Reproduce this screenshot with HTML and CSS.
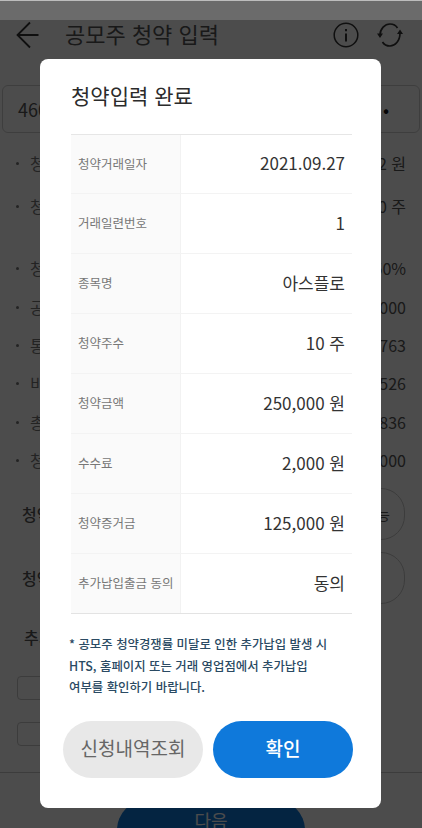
FILE: index.html
```html
<!DOCTYPE html>
<html lang="ko">
<head>
<meta charset="utf-8">
<title>공모주 청약 입력</title>
<link rel="stylesheet" href="styles.css">
</head>
<body>
<div class="page">
  <div class="status"></div>
  <header class="head">
    <svg class="back" width="24" height="28" viewBox="0 0 24 28"><path d="M22.500 14H2M14 1.500 1.500 14 14 26.500" fill="none" stroke="#333" stroke-width="1.800"/></svg>
    <h1 class="title">공모주 청약 입력</h1>
    <svg class="info" width="26" height="26" viewBox="0 0 26 26"><circle cx="13" cy="13" r="11.800" fill="none" stroke="#333" stroke-width="1.500"/><path d="M13 11.500v8M13 7v2.200" stroke="#333" stroke-width="2"/></svg>
    <svg class="refresh" width="26" height="26" viewBox="0 0 26 26"><path d="M3 13.500C3 6.500 8 2 13 2c3.500 0 6 1.500 7.500 4M23 11c0 8-5 13-10 13-3.500 0-6-1.500-7.500-4" fill="none" stroke="#333" stroke-width="1.700"/><path d="M0 11.500h6L3 16zM20 12h6l-3-4.500z" fill="#333"/></svg>
  </header>
  <div class="account"><span>4600</span><span class="dots">•</span></div>
  <ul class="facts">
    <li class="fact f1"><span class="fact-name">청약</span><span>2 원</span></li>
    <li class="fact f2"><span class="fact-name">청약</span><span>0 주</span></li>
    <li class="fact f3"><span class="fact-name">청약</span><span>50%</span></li>
    <li class="fact f4"><span class="fact-name">공모</span><span>000</span></li>
    <li class="fact f5"><span class="fact-name">통합</span><span>763</span></li>
    <li class="fact f6"><span class="fact-name">비례</span><span>526</span></li>
    <li class="fact f7"><span class="fact-name">총공</span><span>836</span></li>
    <li class="fact f8"><span class="fact-name">청약</span><span>000</span></li>
  </ul>
  <div class="field field-first"><span class="label">청약</span><div class="pill">가능</div></div>
  <div class="field"><span class="label">청약</span><div class="pill"></div></div>
  <div class="extra">추가</div>
  <div class="check"></div>
  <div class="check"></div>
  <div class="foot"><button class="next">다음</button></div>
</div>

<div class="dim"></div>

<section class="modal">
  <h2 class="modal-title">청약입력 완료</h2>
  <dl class="table">
    <div class="row"><dt>청약거래일자</dt><dd>2021.09.27</dd></div>
    <div class="row"><dt>거래일련번호</dt><dd>1</dd></div>
    <div class="row"><dt>종목명</dt><dd>아스플로</dd></div>
    <div class="row"><dt>청약주수</dt><dd>10 주</dd></div>
    <div class="row"><dt>청약금액</dt><dd>250,000 원</dd></div>
    <div class="row"><dt>수수료</dt><dd>2,000 원</dd></div>
    <div class="row"><dt>청약증거금</dt><dd>125,000 원</dd></div>
    <div class="row"><dt>추가납입출금 동의</dt><dd>동의</dd></div>
  </dl>
  <p class="note">* 공모주 청약경쟁률 미달로 인한 추가납입 발생 시<br>HTS, 홈페이지 또는 거래 영업점에서 추가납입<br>여부를 확인하기 바랍니다.</p>
  <div class="actions">
    <button class="btn btn-gray">신청내역조회</button>
    <button class="btn btn-blue">확인</button>
  </div>
</section>
</body>
</html>
```
FILE: styles.css
```css
* { box-sizing: border-box; }
html, body { margin: 0; height: 100%; overflow: hidden; }
body {
  position: relative;
  width: 422px;
  height: 828px;
  background: #fff;
  font-family: "Noto Sans CJK KR", "Noto Sans", sans-serif;
  color: #555;
}
.page { display: flex; flex-direction: column; height: 828px; }
.status { height: 20px; flex: none; background: #6b6b6b; border-top: 1px solid #bdbdbd; }
.head { height: 30px; flex: none; display: flex; align-items: center; padding-left: 16px; }
.back { flex: none; }
.title { margin: 0 0 0 25px; padding-bottom: 4px; font-size: 22px; font-weight: 400; white-space: nowrap; line-height: 30px; flex: 1; }
.info { flex: none; margin-right: 18px; }
.refresh { flex: none; margin-right: 19px; }
.account {
  margin: 35px 2px 0;
  height: 48px;
  flex: none;
  border: 1px solid #d0d0d0;
  border-radius: 6px;
  padding: 0 30px 0 15px;
  display: flex;
  justify-content: space-between;
  align-items: center;
  font-size: 18px;
}
.dots { color: #111; }
.facts { list-style: none; margin: 0; padding: 0 16px; flex: none; }
.fact { display: flex; justify-content: space-between; align-items: center; height: 26px; font-size: 16px; padding-left: 14px; position: relative; }
.fact::before { content: ""; position: absolute; left: 0; top: 12px; width: 3px; height: 3px; border-radius: 50%; background: #777; }
.fact-name { color: #777; }
.f1 { margin-top: 17px; }
.f2 { margin-top: 17px; }
.f3 { margin-top: 36px; }
.f4 { margin-top: 13px; }
.f5 { margin-top: 12px; }
.f6 { margin-top: 12px; }
.f7 { margin-top: 13px; }
.f8 { margin-top: 12px; }
.field { display: flex; flex: none; align-items: center; justify-content: space-between; height: 52px; margin-top: 12px; padding: 0 17px 0 22px; font-size: 16px; font-weight: 500; }
.field-first { margin-top: 15px; }
.pill { width: 120px; height: 52px; border: 1px solid #c8c8c8; border-radius: 24px; display: flex; align-items: center; justify-content: flex-end; padding-right: 14px; font-size: 14px; font-weight: 400; }
.extra { margin: 21px 0 0 24px; flex: none; font-size: 16px; font-weight: 500; line-height: 24px; }
.check { width: 60px; height: 24px; margin: 0 0 0 17px; border: 1px solid #c8c8c8; border-radius: 4px; flex: none; }
.extra + .check { margin-top: 27px; }
.check + .check { margin-top: 22px; }
.foot { margin-top: auto; height: 56px; border-top: 1px solid #c8c8c8; display: flex; justify-content: center; align-items: flex-start; padding-top: 27px; overflow: hidden; }
.next { width: 188px; height: 60px; flex: none; border: 0; border-radius: 30px; background: #0f79db; color: #fff; font: inherit; font-size: 18px; padding: 0 0 20px; }

.dim { position: absolute; inset: 20px 0 0; background: rgba(0, 0, 0, .7); }

.modal {
  position: absolute;
  left: 40px;
  top: 59px;
  width: 341px;
  height: 749px;
  background: #fff;
  border-radius: 8px;
  display: flex;
  flex-direction: column;
  padding: 0 29px 0 31px;
}
.modal-title { margin: 19px 0 0; height: 34px; font-size: 21px; line-height: 34px; font-weight: 400; color: #2b2b2b; white-space: nowrap; }
.table { margin: 22px 0 0; border-top: 1px solid #e6e6e6; border-bottom: 1px solid #e3e3e3; }
.row { display: flex; height: 60px; border-top: 1px solid #f3f3f3; }
.row:first-child { border-top: 0; height: 58px; }
dt { width: 110px; flex: none; background: #fafafa; border-right: 1px solid #f2f2f2; padding: 0 0 2px 7px; display: flex; align-items: center; font-size: 12.500px; color: #777; white-space: nowrap; }
dd { flex: 1; margin: 0; padding: 0 7px 3px 0; display: flex; align-items: center; justify-content: flex-end; font-size: 17px; color: #333; white-space: nowrap; }
.note { margin: 20px 0 0 -2px; font-size: 12.400px; line-height: 21.500px; font-weight: 500; color: #2a4a63; white-space: nowrap; }
.actions { display: flex; gap: 10px; margin: 22px 0 0 -8px; }
.btn { width: 140px; height: 57px; flex: none; border: 0; border-radius: 29px; font: inherit; font-size: 19px; padding: 0 0 4px; }
.btn-gray { background: #e8e8e8; color: #666; }
.btn-blue { background: #0f79db; color: #fff; font-weight: 500; }
```
